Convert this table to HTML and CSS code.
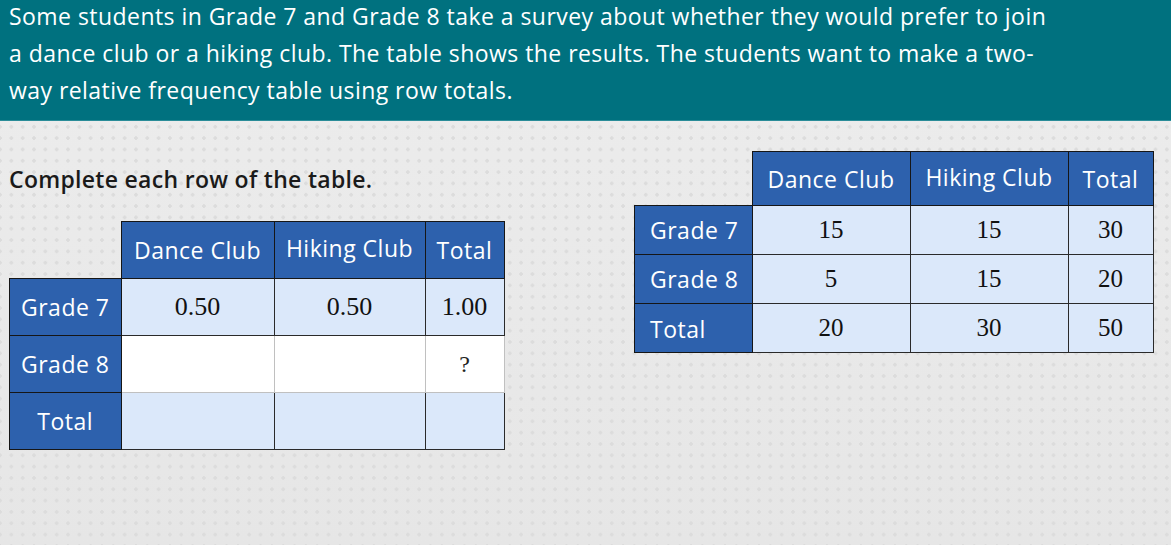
FILE: index.html
```html
<!DOCTYPE html>
<html>
<head>
<meta charset="utf-8">
<link rel="stylesheet" href="styles.css">
</head>
<body>
<header class="intro">
  <p class="intro-text">Some students in Grade 7 and Grade 8 take a survey about whether they would prefer to join a dance club or a hiking club. The table shows the results. The students want to make a two-way relative frequency table using row totals.</p>
</header>
<main class="workspace">
  <section class="task">
    <p class="prompt">Complete each row of the table.</p>
    <table class="grid answer">
      <tr>
        <td class="corner"></td>
        <th class="col col-dance">Dance Club</th>
        <th class="col col-hike"><span class="lift">Hiking Club</span></th>
        <th class="col col-total">Total</th>
      </tr>
      <tr>
        <th class="stub">Grade 7</th>
        <td class="num">0.50</td>
        <td class="num">0.50</td>
        <td class="num">1.00</td>
      </tr>
      <tr>
        <th class="stub">Grade 8</th>
        <td class="input"></td>
        <td class="input"></td>
        <td class="input q">?</td>
      </tr>
      <tr>
        <th class="stub">Total</th>
        <td class="num"></td>
        <td class="num"></td>
        <td class="num"></td>
      </tr>
    </table>
  </section>
  <section class="data">
    <table class="grid source">
      <tr>
        <td class="corner"></td>
        <th class="col col-dance">Dance Club</th>
        <th class="col col-hike"><span class="lift">Hiking Club</span></th>
        <th class="col col-total">Total</th>
      </tr>
      <tr>
        <th class="stub">Grade 7</th>
        <td class="num">15</td>
        <td class="num">15</td>
        <td class="num">30</td>
      </tr>
      <tr>
        <th class="stub">Grade 8</th>
        <td class="num">5</td>
        <td class="num">15</td>
        <td class="num">20</td>
      </tr>
      <tr>
        <th class="stub stub-low">Total</th>
        <td class="num">20</td>
        <td class="num">30</td>
        <td class="num">50</td>
      </tr>
    </table>
  </section>
</main>
</body>
</html>
```
FILE: styles.css
```css
html, body {
  margin: 0;
  padding: 0;
}
body {
  width: 1171px;
  height: 545px;
  overflow: hidden;
  font-family: "Open Sans", Lato, sans-serif;
  background-color: #e9e9e9;
  background-image:
    radial-gradient(circle, #dcdcdc 1.5px, rgba(220,220,220,0) 2px),
    linear-gradient(#ededed, #e6e6e6);
  background-size: 11.333px 11.333px, 100% 100%;
  background-position: -5.67px -3.5px, 0 0;
}
.intro {
  display: flow-root;
  background: #00717f;
  border-bottom: 1px solid #2a8c98;
  height: 121px;
  box-sizing: border-box;
  padding: 0 0 0 9px;
}
.intro-text {
  margin: -2px 0 0 0;
  width: 1052px;
  color: #ffffff;
  font-size: 23px;
  letter-spacing: 0.45px;
  line-height: 37px;
}
.workspace {
  display: flex;
  align-items: flex-start;
  padding-left: 9px;
}
.task {
  width: 625px;
  padding-top: 43px;
}
.prompt {
  margin: 0 0 27px 0;
  font-size: 23px;
  letter-spacing: 0.3px;
  line-height: 30px;
  font-weight: 600;
  color: #1a1a1a;
}
.data {
  padding-top: 30px;
}
.grid {
  border-collapse: collapse;
  table-layout: fixed;
}
.grid th, .grid td {
  padding: 0;
  border: 1px solid #161616;
  text-align: center;
  vertical-align: middle;
}
.grid th {
  background: #2d61ad;
  color: #ffffff;
  font-weight: normal;
  font-size: 23px;
  letter-spacing: 0.5px;
}
.grid .corner {
  border: none;
  background: transparent;
}
.grid .num {
  background: #dbe8fa;
  font-family: "Liberation Serif", "Times New Roman", serif;
  font-size: 26px;
  color: #111;
  border-color: #2a2a2a;
}
.grid .input {
  background: #ffffff;
  border: 1px solid #c0c0c0;
  font-family: "Liberation Serif", serif;
  font-size: 24px;
  color: #222;
}
.lift {
  position: relative;
  top: -2px;
}
.answer .corner { width: 111px; }
.answer .col-dance { width: 152px; }
.answer .col-hike { width: 150px; }
.answer .col-total { width: 78px; }
.answer tr { height: 57px; }
.answer .stub { text-align: center; }

.source .corner { width: 117px; }
.source .col-dance { width: 157px; }
.source .col-hike { width: 157px; }
.source .col-total { width: 84px; }
.source tr { height: 49px; }
.source tr:first-child { height: 54px; }
.source .stub {
  text-align: left;
  padding-left: 15px;
}
.source .stub-low {
  padding-top: 1px;
}
.source .num { font-size: 25px; }
```
